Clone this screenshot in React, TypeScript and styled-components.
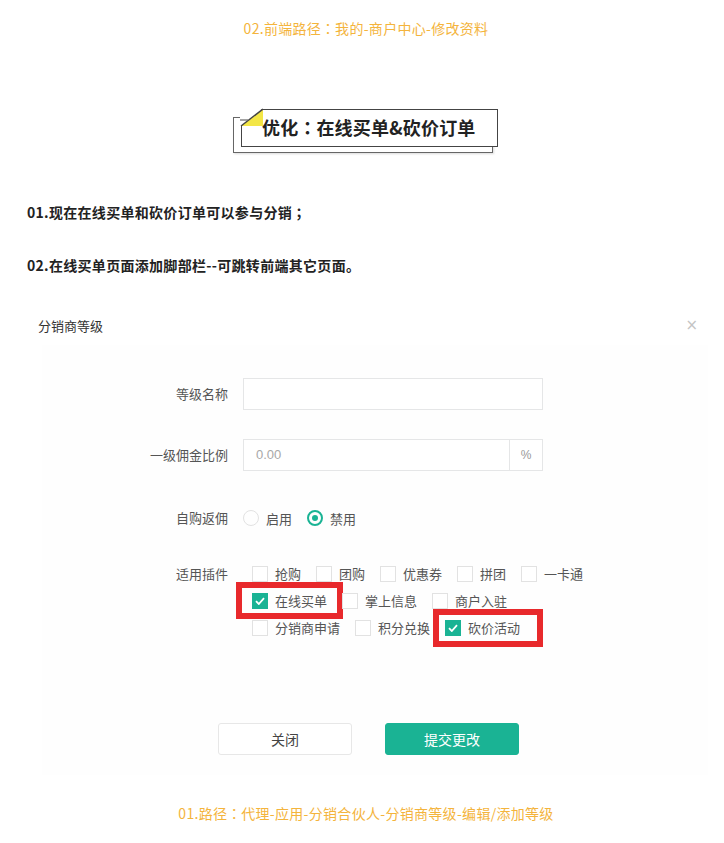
import styled, { createGlobalStyle } from "styled-components"

const GlobalStyle = createGlobalStyle`
  body {
    margin: 0;
    background: #fff;
    font-family: "Noto Sans CJK SC", "Noto Sans", sans-serif;
    color: #333;
    text-spacing-trim: space-all;
  }
`

const Page = styled.div`
  width: 724px;
  padding-bottom: 20px;
`

// full-width punctuation centred in its cell, as in the reference
const Punct = styled.span`
  font-family: "Noto Sans CJK JP", "Noto Sans CJK SC", sans-serif;
  display: inline-block;
  width: 1em;
  text-align: center;
`

const PathNote = styled.div<{ $top: number; $shift?: number }>`
  margin-top: ${(p) => p.$top}px;
  padding-left: ${(p) => p.$shift ?? 0}px;
  text-align: center;
  font-size: 14px;
  line-height: 20px;
  letter-spacing: 0.3px;
  color: #f4b43c;
`

const TitleArea = styled.div`
  position: relative;
  width: 265px;
  margin: 71px 0 0 233px;
  padding: 0 0 6px 8px;
  box-sizing: border-box;

  &::before {
    content: "";
    position: absolute;
    left: 0;
    top: 8px;
    right: 5px;
    bottom: 0;
    border: 1.5px solid #666;
    box-shadow: 1px 1px 2px rgba(0, 0, 0, 0.15);
  }
`

const TitleBox = styled.div`
  position: relative;
  height: 38px;
  box-sizing: border-box;
  border: 1.5px solid #444;
  background: #fff;
  padding-left: 20px;
  font-size: 18px;
  font-weight: bold;
  line-height: 35px;
  color: #222;
  letter-spacing: 0.2px;
`

const Fold = styled.svg`
  position: absolute;
  left: -2px;
  top: -2px;
`

const Note = styled.p<{ $top: number }>`
  margin: ${(p) => p.$top}px 0 0 27px;
  font-size: 14px;
  line-height: 20px;
  font-weight: bold;
  letter-spacing: 0.3px;
  color: #222;
`

const Modal = styled.div`
  margin-top: 40px;
`

const ModalHead = styled.div`
  display: flex;
  justify-content: space-between;
  align-items: center;
  padding: 0 26px 0 38px;
  height: 20px;
  font-size: 13px;
  color: #333;
`

const Close = styled.span`
  color: #c4c4c4;
  font-size: 15px;
  font-family: "DejaVu Sans", sans-serif;
`

const ModalBody = styled.div`
  margin: 10px 16px 0 42px;
  padding: 33px 0 20px 86px;
  background: #fefefe;
`

const Row = styled.div<{ $top: number; $align?: string }>`
  display: flex;
  align-items: ${(p) => p.$align ?? "center"};
  margin-top: ${(p) => p.$top}px;
`

const Label = styled.div<{ $line?: number }>`
  width: 100px;
  margin-right: 15px;
  text-align: right;
  font-size: 13px;
  color: #555;
  line-height: ${(p) => p.$line ?? 20}px;
`

const InputGroup = styled.div`
  display: flex;
  width: 300px;
  height: 32px;
  box-sizing: border-box;
  border: 1px solid #e5e6e7;
  background: #fff;
`

const Field = styled.div`
  flex: 1;
  padding-left: 12px;
  font-size: 13px;
  line-height: 30px;
  color: #a8a8a8;
  font-family: "Liberation Sans", sans-serif;
`

const Addon = styled.div`
  width: 32px;
  border-left: 1px solid #e5e6e7;
  text-align: center;
  font-size: 12px;
  line-height: 30px;
  color: #999;
  font-family: "Liberation Sans", sans-serif;
`

const Choice = styled.label`
  display: flex;
  align-items: center;
  gap: 7px;
  font-size: 13px;
  color: #555;
  height: 32px;
`

const Radio = styled.span<{ $on?: boolean }>`
  width: 16px;
  height: 16px;
  box-sizing: border-box;
  border-radius: 50%;
  border: ${(p) => (p.$on ? "2px solid #1ab394" : "1px solid #e2e2e2")};
  display: flex;
  align-items: center;
  justify-content: center;

  &::after {
    content: "";
    width: 6px;
    height: 6px;
    border-radius: 50%;
    background: ${(p) => (p.$on ? "#1ab394" : "transparent")};
  }
`

const RadioGroup = styled.div`
  display: flex;
  gap: 15px;
`

const CheckGroup = styled.div`
  display: flex;
  flex-wrap: wrap;
  column-gap: 15px;
  width: 345px;
  padding-left: 9px;
`

const CheckItem = styled.div<{ $mark?: [number, number, number, number] }>`
  position: relative;
  display: flex;
  align-items: center;
  gap: 7px;
  height: 27px;
  font-size: 13px;
  color: #555;

  ${(p) =>
    p.$mark &&
    `&::after {
      content: "";
      position: absolute;
      top: ${p.$mark[0]}px;
      right: ${p.$mark[1]}px;
      bottom: ${p.$mark[2]}px;
      left: ${p.$mark[3]}px;
      border: 6px solid #e8292c;
    }`}
`

const Box = styled.span<{ $on?: boolean }>`
  width: 16px;
  height: 16px;
  box-sizing: border-box;
  border: 1px solid ${(p) => (p.$on ? "#1ab394" : "#e2e2e2")};
  background: ${(p) => (p.$on ? "#1ab394" : "#fff")};
  display: flex;
  align-items: center;
  justify-content: center;
`

const Actions = styled.div`
  display: flex;
  gap: 33px;
  margin: 82px 0 0 90px;
`

const Button = styled.button<{ $primary?: boolean }>`
  width: 134px;
  height: 32px;
  border-radius: 3px;
  font-family: inherit;
  font-size: 14px;
  border: 1px solid ${(p) => (p.$primary ? "#1ab394" : "#e7e7e7")};
  background: ${(p) => (p.$primary ? "#1ab394" : "#fff")};
  color: ${(p) => (p.$primary ? "#fff" : "#444")};
`

type Plugin = { name: string; on?: boolean; mark?: [number, number, number, number] }

const plugins: Plugin[] = [
  { name: "抢购" },
  { name: "团购" },
  { name: "优惠券" },
  { name: "拼团" },
  { name: "一卡通" },
  { name: "在线买单", on: true, mark: [-5, -16, -5, -16] },
  { name: "掌上信息" },
  { name: "商户入驻" },
  { name: "分销商申请" },
  { name: "积分兑换" },
  { name: "砍价活动", on: true, mark: [-5, -23, -6, -12] },
]

const Tick = () => (
  <svg width="10" height="8" viewBox="0 0 10 8">
    <path d="M1 4.2 L3.8 7 L9 1.2" fill="none" stroke="#fff" strokeWidth="1.8" />
  </svg>
)

export default function App() {
  return (
    <Page>
      <GlobalStyle />
      <PathNote $top={18} $shift={8}>
        02.前端路径<Punct>：</Punct>我的-商户中心-修改资料
      </PathNote>

      <TitleArea>
        <TitleBox>
          <Fold width="23" height="19" viewBox="0 0 23 19">
            <polygon points="0,0 23,0 0,19" fill="#fff" />
            <polygon points="23,1 23,18 1,18" fill="#f3e646" />
            <line x1="1" y1="18" x2="23" y2="1" stroke="#444" strokeWidth="1.5" />
            <line x1="0" y1="12" x2="8" y2="12" stroke="#666" strokeWidth="1.2" />
          </Fold>
          优化<Punct>：</Punct>在线买单&amp;砍价订单
        </TitleBox>
      </TitleArea>

      <Note $top={49}>
        01.现在在线买单和砍价订单可以参与分销<Punct>；</Punct>
      </Note>
      <Note $top={33}>02.在线买单页面添加脚部栏--可跳转前端其它页面。</Note>

      <Modal>
        <ModalHead>
          <span>分销商等级</span>
          <Close>×</Close>
        </ModalHead>
        <ModalBody>
          <Row $top={0}>
            <Label>等级名称</Label>
            <InputGroup>
              <Field />
            </InputGroup>
          </Row>
          <Row $top={29}>
            <Label>一级佣金比例</Label>
            <InputGroup>
              <Field>0.00</Field>
              <Addon>%</Addon>
            </InputGroup>
          </Row>
          <Row $top={31}>
            <Label>自购返佣</Label>
            <RadioGroup>
              <Choice>
                <Radio />
                启用
              </Choice>
              <Choice>
                <Radio $on />
                禁用
              </Choice>
            </RadioGroup>
          </Row>
          <Row $top={26} $align="flex-start">
            <Label $line={27}>适用插件</Label>
            <CheckGroup>
              {plugins.map((p) => (
                <CheckItem key={p.name} $mark={p.mark}>
                  <Box $on={p.on}>{p.on && <Tick />}</Box>
                  {p.name}
                </CheckItem>
              ))}
            </CheckGroup>
          </Row>
          <Actions>
            <Button>关闭</Button>
            <Button $primary>提交更改</Button>
          </Actions>
        </ModalBody>
      </Modal>

      <PathNote $top={28} $shift={8}>
        01.路径<Punct>：</Punct>代理-应用-分销合伙人-分销商等级-编辑/添加等级
      </PathNote>
    </Page>
  )
}
